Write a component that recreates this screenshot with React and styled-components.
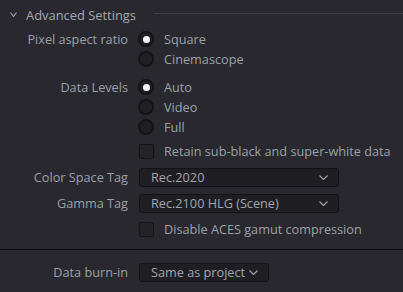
import React from "react";
import styled, { createGlobalStyle } from "styled-components";

const Global = createGlobalStyle`
  html, body {
    margin: 0;
    background: #28282e;
  }
  body {
    font-family: "Open Sans", "Noto Sans", sans-serif;
    font-size: 12.7px;
    color: #9ba1a9;
  }
`;

const Panel = styled.div`
  width: 403px;
  height: 292px;
  overflow: hidden;
  background: #28282e;
`;

const Header = styled.div`
  height: 29px;
  display: flex;
  align-items: center;
  padding-left: 10px;
  gap: 9px;
  color: #a3a8b0;
  font-size: 12.9px;
  &::after {
    content: "";
    flex: 1;
    height: 1px;
    background: #3d3d44;
    margin-left: 9px;
    margin-top: -2px;
  }
`;

const Row = styled.div`
  display: flex;
  align-items: flex-start;
  margin-top: ${(p) => p.$gap || 0}px;
`;

const Label = styled.div`
  width: 128px;
  height: 20px;
  line-height: 20px;
  text-align: right;
  flex-shrink: 0;
  margin-right: 10px;
`;

const Controls = styled.div`
  display: flex;
  flex-direction: column;
`;

const Option = styled.div`
  height: 20px;
  display: flex;
  align-items: center;
  gap: 10px;
`;

const Radio = styled.span`
  width: 12px;
  height: 12px;
  border-radius: 50%;
  border: 2px solid #141417;
  background: #202024;
  display: flex;
  align-items: center;
  justify-content: center;
  &::after {
    content: "";
    width: 7px;
    height: 7px;
    border-radius: 50%;
    background: ${(p) => (p.$on ? "#f4f4f4" : "transparent")};
  }
`;

const Box = styled.span`
  width: 13px;
  height: 13px;
  margin-left: 1px;
  border-radius: 2px;
  border: 1px solid #141417;
  background: #232328;
`;

const Select = styled.div`
  width: ${(p) => p.$w}px;
  height: 19px;
  margin-left: 1px;
  box-sizing: border-box;
  border: 1px solid #131316;
  border-radius: 3px;
  background: #1f1f23;
  display: flex;
  align-items: center;
  justify-content: space-between;
  padding: 0 10px 0 11px;
  color: #a0a6ae;
  margin-top: 0.5px;
`;

const Divider = styled.div`
  height: 1px;
  background: #111114;
  margin-top: 10px;
`;

const Chevron = ({ w = 9, h = 5 }) => (
  <svg width={w} height={h} viewBox={`0 0 ${w} ${h}`} fill="none">
    <path
      d={`M0.5 0.5L${w / 2} ${h - 0.5}L${w - 0.5} 0.5`}
      stroke="#9ba1a9"
      strokeWidth="1.2"
    />
  </svg>
);

const App = () => (
  <Panel>
    <Global />
    <Header>
      <Chevron w={7} h={5} />
      <span>Advanced Settings</span>
    </Header>

    <Row>
      <Label>Pixel aspect ratio</Label>
      <Controls>
        <Option><Radio $on />Square</Option>
        <Option><Radio />Cinemascope</Option>
      </Controls>
    </Row>

    <Row $gap={8}>
      <Label>Data Levels</Label>
      <Controls>
        <Option><Radio $on />Auto</Option>
        <Option><Radio />Video</Option>
        <Option><Radio />Full</Option>
      </Controls>
    </Row>

    <Row $gap={4}>
      <Label />
      <Option><Box />Retain sub-black and super-white data</Option>
    </Row>

    <Row $gap={6}>
      <Label>Color Space Tag</Label>
      <Select $w={200}>Rec.2020<Chevron /></Select>
    </Row>

    <Row $gap={6}>
      <Label>Gamma Tag</Label>
      <Select $w={200}>Rec.2100 HLG (Scene)<Chevron /></Select>
    </Row>

    <Row $gap={6}>
      <Label />
      <Option><Box />Disable ACES gamut compression</Option>
    </Row>

    <Divider />

    <Row $gap={12}>
      <Label>Data burn-in</Label>
      <Select $w={130}>Same as project<Chevron /></Select>
    </Row>
  </Panel>
);

export default App;
